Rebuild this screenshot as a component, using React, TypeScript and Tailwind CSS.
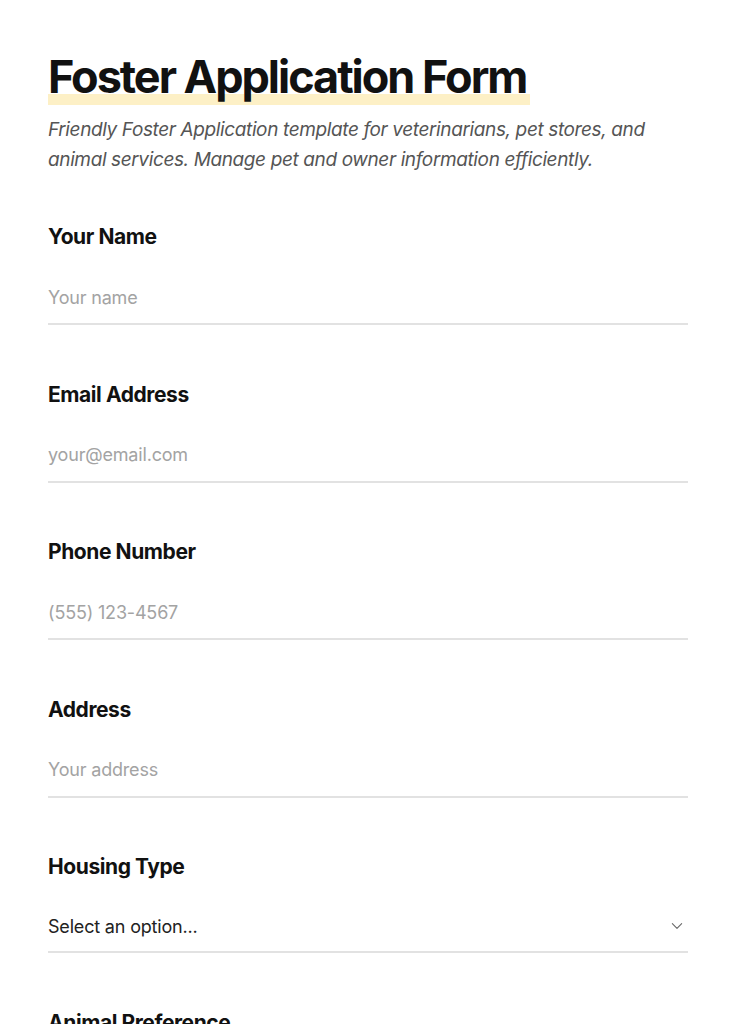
import React from 'react';

const fields = [
  { label: 'Your Name', placeholder: 'Your name', type: 'text' },
  { label: 'Email Address', placeholder: 'your@email.com', type: 'email' },
  { label: 'Phone Number', placeholder: '(555) 123-4567', type: 'tel' },
  { label: 'Address', placeholder: 'Your address', type: 'text' },
];

const Field = ({ label, children }: { label: string; children: React.ReactNode }) => (
  <div className="flex flex-col gap-6 mb-[55.5px]">
    <label className="text-[21px] leading-7 font-bold tracking-[-0.02em] text-[#111]">{label}</label>
    {children}
  </div>
);

export default function App() {
  return (
    <div className="min-h-screen bg-white px-12 pt-[49px] font-['Inter',sans-serif] text-[#111]">
      <h1 className="text-[45px] leading-[56px] font-bold tracking-[-0.045em]">
        <span className="inline-block bg-[linear-gradient(transparent_80%,#fdf0c6_80%)] pr-1">
          Foster Application Form
        </span>
      </h1>
      <p className="mt-2.5 text-[19px] leading-[30px] italic text-[#555] tracking-[-0.02em]">
        Friendly Foster Application template for veterinarians, pet stores, and animal services. Manage pet and owner
        information efficiently.
      </p>

      <div className="mt-12">
        {fields.map((f) => (
          <Field key={f.label} label={f.label}>
            <input
              type={f.type}
              placeholder={f.placeholder}
              className="h-[50px] w-full border-b-2 border-[#e2e2e2] bg-transparent pb-1 text-[18px] outline-none placeholder:text-[#a3a3a3] tracking-[-0.01em]"
            />
          </Field>
        ))}
        <Field label="Housing Type">
          <div className="flex h-[48px] w-full items-center justify-between border-b-2 border-[#e2e2e2] pb-1">
            <span className="text-[18px] text-[#222] tracking-[-0.01em]">Select an option...</span>
            <svg width="14" height="14" viewBox="0 0 24 24" fill="none" stroke="#666" strokeWidth="1.8" strokeLinecap="round" strokeLinejoin="round" className="mr-1">
              <path d="M4 8l8 8 8-8" />
            </svg>
          </div>
        </Field>
        <Field label="Animal Preference">
          <div className="h-[50px] w-full border-b-2 border-[#e2e2e2]" />
        </Field>
      </div>
    </div>
  );
}
